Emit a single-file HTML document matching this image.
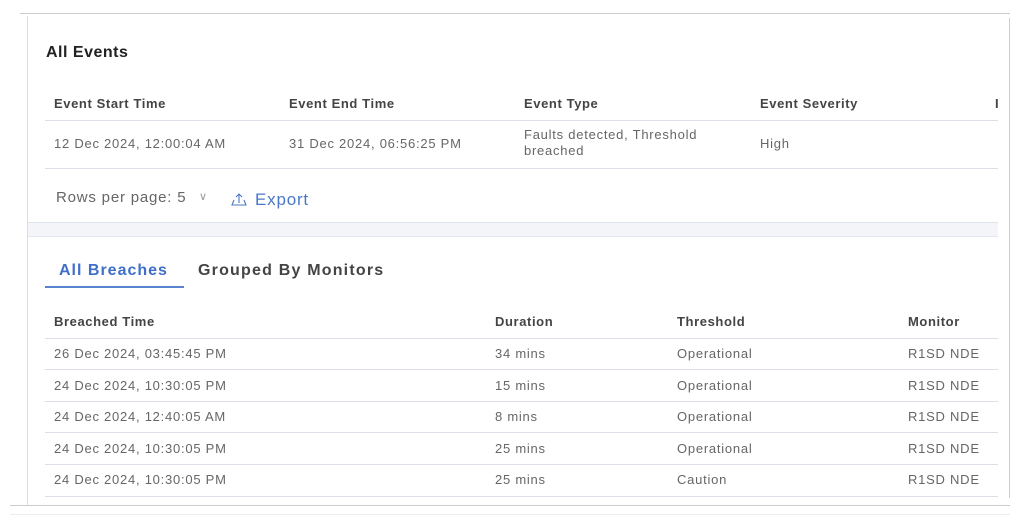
<!DOCTYPE html>
<html><head><style>
*{margin:0;padding:0;box-sizing:border-box}
body{width:1030px;height:530px;background:#fff;position:relative;overflow:hidden;font-family:"Liberation Sans",Arial,sans-serif;color:#555}
.a{position:absolute;white-space:nowrap}
.h{font-size:13px;font-weight:bold;color:#444;letter-spacing:0.6px}
.t{font-size:13px;color:#666;letter-spacing:0.75px}
.l{position:absolute;left:45px;width:953px;height:1px;background:#dcdfea}
</style></head><body>
<div class="a" style="left:20px;top:13px;width:990px;height:1px;background:#ccc"></div>
<div class="a" style="left:27px;top:16px;width:1px;height:490px;background:#ddd"></div>
<div class="a" style="left:1009px;top:18px;width:1px;height:480px;background:#ccc"></div>
<div class="a" style="left:10px;top:505px;width:1000px;height:1px;background:#ccc"></div>
<div class="a" style="left:10px;top:514px;width:1000px;height:1px;background:#eee"></div>

<div class="a" style="left:46px;top:44px;font-size:16px;font-weight:bold;color:#222;letter-spacing:0.5px">All Events</div>
<div class="a h" style="left:54px;top:96px">Event Start Time</div>
<div class="a h" style="left:289px;top:96px">Event End Time</div>
<div class="a h" style="left:524px;top:96px">Event Type</div>
<div class="a h" style="left:760px;top:96px">Event Severity</div>
<div class="a h" style="left:995px;top:96px">I</div>
<div class="l" style="top:120px"></div>
<div class="a t" style="left:54px;top:136px">12 Dec 2024, 12:00:04 AM</div>
<div class="a t" style="left:289px;top:136px">31 Dec 2024, 06:56:25 PM</div>
<div class="a t" style="left:524px;top:127px;line-height:16px">Faults detected, Threshold<br>breached</div>
<div class="a t" style="left:760px;top:136px">High</div>
<div class="l" style="top:168px"></div>
<div class="a" style="left:56px;top:189px;font-size:15px;color:#666;letter-spacing:0.8px">Rows per page: 5</div>
<div class="a" style="left:199px;top:190px;font-size:11px;color:#999">&#8744;</div>
<svg class="a" style="left:231px;top:192px" width="16" height="14" viewBox="0 0 16 14"><path d="M3 8 L1 13 H15 L13 8 M8 11 V2 M5 5 L8 2 L11 5" fill="none" stroke="#4a78c8" stroke-width="1.1"/></svg>
<div class="a" style="left:255px;top:190px;font-size:17px;color:#4a78c8;letter-spacing:0.8px">Export</div>
<div class="a" style="left:28px;top:222px;width:970px;height:15px;background:#f4f5f9;border-top:1px solid #dfe3ee;border-bottom:1px solid #e3e6ef"></div>

<div class="a" style="left:59px;top:262px;font-size:16px;font-weight:bold;color:#3f6fc8;letter-spacing:1px">All Breaches</div>
<div class="a" style="left:198px;top:262px;font-size:16px;font-weight:bold;color:#444;letter-spacing:1.2px">Grouped By Monitors</div>
<div class="a" style="left:45px;top:286px;width:139px;height:2px;background:#5a83cf"></div>

<div class="a h" style="left:54px;top:314px">Breached Time</div>
<div class="a h" style="left:495px;top:314px">Duration</div>
<div class="a h" style="left:677px;top:314px">Threshold</div>
<div class="a h" style="left:908px;top:314px">Monitor</div>
<div class="l" style="top:338px"></div>

<div class="a t" style="left:54px;top:346px">26 Dec 2024, 03:45:45 PM</div><div class="a t" style="left:495px;top:346px">34 mins</div><div class="a t" style="left:677px;top:346px">Operational</div><div class="a t" style="left:908px;top:346px">R1SD NDE</div>
<div class="l" style="top:369px"></div>
<div class="a t" style="left:54px;top:378px">24 Dec 2024, 10:30:05 PM</div><div class="a t" style="left:495px;top:378px">15 mins</div><div class="a t" style="left:677px;top:378px">Operational</div><div class="a t" style="left:908px;top:378px">R1SD NDE</div>
<div class="l" style="top:401px"></div>
<div class="a t" style="left:54px;top:409px">24 Dec 2024, 12:40:05 AM</div><div class="a t" style="left:495px;top:409px">8 mins</div><div class="a t" style="left:677px;top:409px">Operational</div><div class="a t" style="left:908px;top:409px">R1SD NDE</div>
<div class="l" style="top:432px"></div>
<div class="a t" style="left:54px;top:441px">24 Dec 2024, 10:30:05 PM</div><div class="a t" style="left:495px;top:441px">25 mins</div><div class="a t" style="left:677px;top:441px">Operational</div><div class="a t" style="left:908px;top:441px">R1SD NDE</div>
<div class="l" style="top:464px"></div>
<div class="a t" style="left:54px;top:472px">24 Dec 2024, 10:30:05 PM</div><div class="a t" style="left:495px;top:472px">25 mins</div><div class="a t" style="left:677px;top:472px">Caution</div><div class="a t" style="left:908px;top:472px">R1SD NDE</div>
<div class="l" style="top:496px"></div>
</body></html>
